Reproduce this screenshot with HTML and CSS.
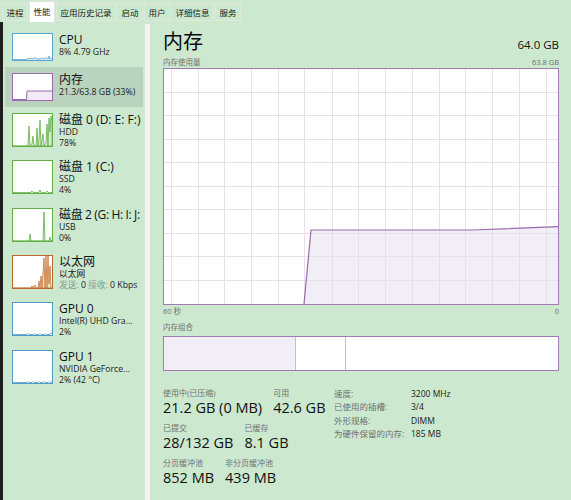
FILE: index.html
```html
<!DOCTYPE html>
<html lang="zh-CN">
<head>
<meta charset="utf-8">
<title>任务管理器 - 性能</title>
<link rel="stylesheet" href="styles.css">
</head>
<body>
<div class="tabs">
  <div class="tab">进程</div>
  <div class="tab active">性能</div>
  <div class="tab">应用历史记录</div>
  <div class="tab">启动</div>
  <div class="tab">用户</div>
  <div class="tab">详细信息</div>
  <div class="tab">服务</div>
</div>
<div class="layout">
  <div class="edge"></div>
  <nav class="sidebar">
    <div class="item short">
      <div class="thumb cpu">
        <svg viewBox="0 0 39 26" preserveAspectRatio="none"><polygon points="0,26 14,26 15,24 16,25 18,24 20,25 22,23.5 24,25 27,25 29,24 31,25 33,23.5 35,25 36,22 37,25 39,24 39,26" fill="#dcebf6"/><polyline points="0,25.5 14,25.5 15,24 16,25 18,24 20,25 22,23.5 24,25 27,25 29,24 31,25 33,23.5 35,25 36,22 37,25 39,24" fill="none" stroke="#5aa6d3" stroke-width="0.8"/></svg>
      </div>
      <div class="info"><div class="name">CPU</div><div class="sub">8% 4.79 GHz</div></div>
    </div>
    <div class="item short selected">
      <div class="thumb mem">
        <svg viewBox="0 0 39 26" preserveAspectRatio="none"><rect x="14" y="17" width="25" height="9" fill="#f1e9f5"/><polyline points="0,25.5 13.5,25.5 14,17 39,17" fill="none" stroke="#9b6bb3" stroke-width="1"/></svg>
      </div>
      <div class="info"><div class="name">内存</div><div class="sub">21.3/63.8 GB (33%)</div></div>
    </div>
    <div class="item">
      <div class="thumb disk">
        <svg viewBox="0 0 39 32" preserveAspectRatio="none"><polygon points="0,32 14,32 15,31 16,12 17,32 19,30 20,22 21,32 23,31 24,14 25,32 26,25 27,6 28,32 30,20 31,32 33,28 34,10 35,32 36,4 37,18 38,2 39,8 39,32" fill="#d7ecce" stroke="#62ad45" stroke-width="0.8"/></svg>
      </div>
      <div class="info"><div class="name">磁盘 0 (D: E: F:)</div><div class="sub">HDD</div><div class="sub">78%</div></div>
    </div>
    <div class="item">
      <div class="thumb disk">
        <svg viewBox="0 0 39 32" preserveAspectRatio="none"><polyline points="0,31.5 18,31.5 19,30 20,31.5 26,31.5 27,29 28,31.5 33,31.5 34,30 35,31.5 39,31.5" fill="#d7ecce" stroke="#62ad45" stroke-width="0.8"/></svg>
      </div>
      <div class="info"><div class="name">磁盘 1 (C:)</div><div class="sub">SSD</div><div class="sub">4%</div></div>
    </div>
    <div class="item">
      <div class="thumb disk">
        <svg viewBox="0 0 39 32" preserveAspectRatio="none"><polygon points="0,32 16,32 17,25 18,32 30,32 31,3 32,32 36,32 37,28 38,32 39,32" fill="#d7ecce" stroke="#62ad45" stroke-width="0.8"/></svg>
      </div>
      <div class="info"><div class="name tight">磁盘 2 (G: H: I: J:</div><div class="sub">USB</div><div class="sub">0%</div></div>
    </div>
    <div class="item">
      <div class="thumb eth">
        <svg viewBox="0 0 39 32" preserveAspectRatio="none"><polygon points="0,32 18,32 19,30 20,32 22,29 23,32 25,32 26,25 27,32 28,20 29,32 31,2 32,32 33,0 34,32 35,0 36,28 37,10 38,32 39,32" fill="#f3dcc8" stroke="#c7763a" stroke-width="0.8"/></svg>
      </div>
      <div class="info"><div class="name">以太网</div><div class="sub">以太网</div><div class="sub"><span class="muted">发送:</span> 0 <span class="muted">接收:</span> 0 Kbps</div></div>
    </div>
    <div class="item">
      <div class="thumb gpu">
        <svg viewBox="0 0 39 32" preserveAspectRatio="none"><polyline points="0,31.5 14,31.5 15,30.5 16,31.5 20,31.5 21,30.5 22,31.5 26,31.5 27,30.5 28,31.5 32,31.5 33,30.5 34,31.5 37,31.5 38,30 39,31" fill="none" stroke="#4f9bc6" stroke-width="0.8"/></svg>
      </div>
      <div class="info"><div class="name">GPU 0</div><div class="sub">Intel(R) UHD Gra...</div><div class="sub">2%</div></div>
    </div>
    <div class="item">
      <div class="thumb gpu">
        <svg viewBox="0 0 39 32" preserveAspectRatio="none"><polyline points="0,31.5 14,31.5 15,30.5 16,31.5 19,31.5 20,30.5 21,31.5 25,31.5 26,30.5 27,31.5 30,31.5 31,30.5 32,31.5 35,31.5 36,30.5 37,31.5 39,31" fill="none" stroke="#4f9bc6" stroke-width="0.8"/></svg>
      </div>
      <div class="info"><div class="name">GPU 1</div><div class="sub">NVIDIA GeForce...</div><div class="sub">2% (42 °C)</div></div>
    </div>
  </nav>
  <div class="divider"></div>
  <main class="main">
    <div class="head">
      <div class="title">内存</div>
      <div class="total">64.0 GB</div>
    </div>
    <div class="subhead"><span>内存使用量</span><span>63.8 GB</span></div>
    <div class="chart">
      <svg viewBox="0 0 394 235" width="394" height="235">
        <polygon points="140,235 147,161 309,161 394,157.7 394,235" fill="#f2eef5"/>
        <g stroke="#e7e0eb" stroke-width="1">
          <line x1="7.5" y1="0" x2="7.5" y2="235"/>
          <line x1="34.5" y1="0" x2="34.5" y2="235"/>
          <line x1="60.5" y1="0" x2="60.5" y2="235"/>
          <line x1="87.5" y1="0" x2="87.5" y2="235"/>
          <line x1="114.5" y1="0" x2="114.5" y2="235"/>
          <line x1="140.5" y1="0" x2="140.5" y2="235"/>
          <line x1="168.5" y1="0" x2="168.5" y2="235"/>
          <line x1="194.5" y1="0" x2="194.5" y2="235"/>
          <line x1="221.5" y1="0" x2="221.5" y2="235"/>
          <line x1="248.5" y1="0" x2="248.5" y2="235"/>
          <line x1="275.5" y1="0" x2="275.5" y2="235"/>
          <line x1="301.5" y1="0" x2="301.5" y2="235"/>
          <line x1="328.5" y1="0" x2="328.5" y2="235"/>
          <line x1="355.5" y1="0" x2="355.5" y2="235"/>
          <line x1="382.5" y1="0" x2="382.5" y2="235"/>
          <line x1="0" y1="23.5" x2="394" y2="23.5"/>
          <line x1="0" y1="46.5" x2="394" y2="46.5"/>
          <line x1="0" y1="70.5" x2="394" y2="70.5"/>
          <line x1="0" y1="93.5" x2="394" y2="93.5"/>
          <line x1="0" y1="117.5" x2="394" y2="117.5"/>
          <line x1="0" y1="140.5" x2="394" y2="140.5"/>
          <line x1="0" y1="164.5" x2="394" y2="164.5"/>
          <line x1="0" y1="187.5" x2="394" y2="187.5"/>
          <line x1="0" y1="211.5" x2="394" y2="211.5"/>
        </g>
        <polyline points="140,235 147,161 309,161 394,157.7" fill="none" stroke="#9a6aae" stroke-width="1.2"/>
      </svg>
    </div>
    <div class="axis"><span>60 秒</span><span>0</span></div>
    <div class="comp-label">内存组合</div>
    <div class="comp">
      <div class="seg used"></div>
      <div class="seg standby"></div>
      <div class="seg free"></div>
    </div>
    <div class="stats">
      <div class="stats-left">
        <div class="srow">
          <div class="stat"><div class="label">使用中(已压缩)</div><div class="value">21.2 GB (0 MB)</div></div>
          <div class="stat"><div class="label">可用</div><div class="value">42.6 GB</div></div>
        </div>
        <div class="srow">
          <div class="stat"><div class="label">已提交</div><div class="value">28/132 GB</div></div>
          <div class="stat"><div class="label">已缓存</div><div class="value">8.1 GB</div></div>
        </div>
        <div class="srow">
          <div class="stat"><div class="label">分页缓冲池</div><div class="value">852 MB</div></div>
          <div class="stat"><div class="label">非分页缓冲池</div><div class="value">439 MB</div></div>
        </div>
      </div>
      <dl class="specs">
        <dt>速度:</dt><dd>3200 MHz</dd>
        <dt>已使用的插槽:</dt><dd>3/4</dd>
        <dt>外形规格:</dt><dd>DIMM</dd>
        <dt>为硬件保留的内存:</dt><dd>185 MB</dd>
      </dl>
    </div>
  </main>
</div>
</body>
</html>
```

FILE: styles.css
```css
* { box-sizing: border-box; }
html, body { margin: 0; padding: 0; }
body {
  width: 571px;
  height: 500px;
  overflow: hidden;
  background: #cce8cf;
  color: #111;
  font-family: "Open Sans", "Noto Sans CJK SC", sans-serif;
}

/* tabs */
.tabs {
  display: flex;
  align-items: flex-start;
  gap: 1px;
  height: 22px;
  padding-left: 2px;
}
.tab {
  margin-top: 3px;
  height: 18px;
  line-height: 16px;
  padding: 0 3.5px;
  font-family: "Noto Sans CJK SC", sans-serif;
  font-size: 8.5px;
  color: #1a1a1a;
  border: 1px solid #dfe7df;
}
.tab.active {
  margin-top: 1px;
  height: 21px;
  line-height: 19px;
  background: #fff;
  border-bottom: none;
}

/* layout */
.layout { display: flex; height: 478px; }
.edge { width: 3px; background: #1f1d1d; flex: none; }
.divider { width: 5px; background: #f3f5f3; flex: none; margin-top: 2px; }

/* sidebar */
.sidebar { width: 142px; flex: none; padding-top: 4.5px; overflow: hidden; }
.item {
  display: flex;
  align-items: flex-start;
  gap: 6px;
  height: 47.3px;
  margin: 0 2px;
  padding: 6px 0 0 7px;
}
.item.short { height: 40.3px; }
.item.selected { background: #b9d3be; }
.thumb {
  flex: none;
  width: 41px;
  height: 34px;
  border: 1px solid #5aa6d3;
  background: #fff;
}
.item.short .thumb { height: 28px; }
.thumb svg { display: block; width: 100%; height: 100%; }
.thumb.cpu { border-color: #5aa6d3; }
.thumb.mem { border-color: #9b6bb3; }
.thumb.disk { border-color: #62ad45; }
.thumb.eth { border-color: #b86a2c; }
.thumb.gpu { border-color: #4f9bc6; }
.info { flex: 1; min-width: 0; overflow: hidden; margin-top: -1px; }
.name { font-size: 12px; line-height: 15px; white-space: nowrap; color: #111; }
.name.tight { letter-spacing: -0.35px; }
.sub { font-size: 8.7px; line-height: 11px; white-space: nowrap; color: #1a1a1a; }
.muted { color: #8a9a8c; }

/* main */
.main {
  flex: 1;
  min-width: 0;
  display: flex;
  flex-direction: column;
  padding: 6px 12px 0 13px;
}
.head {
  display: flex;
  justify-content: space-between;
  align-items: baseline;
  height: 28px;
}
.title { font-family: "Noto Sans CJK SC", sans-serif; font-size: 20px; line-height: 26px; color: #0a0a0a; }
.total { font-size: 11.5px; color: #111; }
.subhead {
  display: flex;
  justify-content: space-between;
  height: 12px;
  line-height: 12px;
  font-size: 7.5px;
  color: #707070;
}
.chart {
  height: 237px;
  border: 1px solid #a07bb4;
  background: #fff;
}
.chart svg { display: block; }
.axis {
  display: flex;
  justify-content: space-between;
  height: 13px;
  line-height: 13px;
  font-size: 7.5px;
  color: #707070;
}
.comp-label { height: 18px; line-height: 18px; font-size: 7.5px; color: #707070; }
.comp {
  display: flex;
  height: 35px;
  border: 1px solid #a07bb4;
  background: #fff;
}
.seg { height: 100%; }
.seg.used { width: 132px; background: #f2eef5; border-right: 1px solid #cdb8d7; }
.seg.standby { width: 50px; border-right: 1px solid #cdb8d7; }
.seg.free { flex: 1; }

/* stats */
.stats { display: flex; align-items: flex-start; margin-top: 16px; }
.stats-left { width: 171px; flex: none; }
.srow { display: flex; gap: 11px; margin-bottom: 5px; }
.label { font-size: 8px; line-height: 12px; color: #707070; white-space: nowrap; }
.value { font-size: 14.5px; line-height: 18px; color: #111; white-space: nowrap; }
.specs {
  display: grid;
  grid-template-columns: 77px auto;
  align-content: start;
  margin: 0;
  font-size: 8.5px;
  line-height: 13.3px;
}
.specs dt { color: #707070; }
.specs dd { margin: 0; color: #1a1a1a; }
```
